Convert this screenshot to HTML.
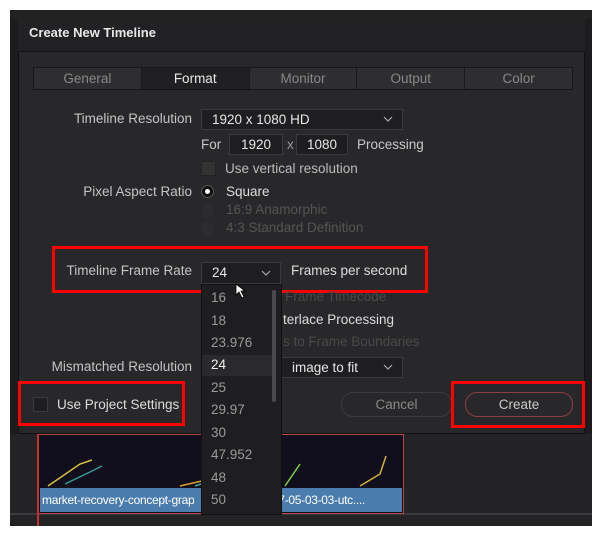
<!DOCTYPE html><html><head><style>
*{margin:0;padding:0;box-sizing:border-box}
body{width:600px;height:536px;background:#fff;position:relative;overflow:hidden;font-family:"Liberation Sans",sans-serif;font-size:13.5px;color:#c8c8c8}
.a{position:absolute}
.lbl{position:absolute;text-align:right;width:180px;left:12px;color:#c4c4c4}
.dd{position:absolute;background:#1e1e21;border:1px solid #3a3a3e;color:#e6e6e6;padding-left:10px;line-height:19px}
.chev{position:absolute}
.red{position:absolute;border:3px solid #f00}
.it{position:absolute;left:211px;color:#9a9a9a}
</style></head><body>
<div class="a" style="left:10px;top:10px;width:582px;height:516px;background:#1c1c1e"></div>
<div class="a" style="left:10px;top:10px;width:582px;height:8px;background:#222"></div>
<div class="a" style="left:10px;top:434px;width:582px;height:92px;background:#232326"></div>
<div class="a" style="left:10px;top:513px;width:582px;height:2px;background:#3a3a3d"></div>
<div class="a" style="left:38px;top:434px;width:366px;height:80px;background:#120f1c;border:1px solid #b04848"></div>
<svg class="a" style="left:40px;top:434px" width="362" height="54"><g fill="none" stroke-width="1.5"><path d="M8 52 L40 30 L52 26" stroke="#d8c040"/><path d="M25 50 L50 38 L62 32" stroke="#3a9a9a"/><path d="M140 52 L175 44 L190 30 L208 26" stroke="#e0a030"/><path d="M155 52 L185 42 L200 32" stroke="#40a0a0"/><path d="M245 52 L260 30" stroke="#80d040"/><path d="M320 52 L340 40 L346 22" stroke="#d0b040"/></g></svg>
<div class="a" style="left:40px;top:488px;width:362px;height:24px;background:#4a7cae;color:#fff;font-size:12px;line-height:24px;padding-left:2px;letter-spacing:-0.3px;white-space:nowrap;overflow:hidden">market-recovery-concept-grap<span style="padding-left:52px">3-11-27-05-03-03-utc....</span></div>
<div class="a" style="left:37px;top:434px;width:2px;height:92px;background:#c03030"></div>
<div class="a" style="left:18px;top:18px;width:567px;height:416px;background:#28282b;border:1px solid #111"></div>
<div class="a" style="left:18px;top:18px;width:567px;height:34px;background:#222225;border-bottom:1px solid #151515"></div>
<div class="a" style="left:29px;top:25px;font-weight:bold;color:#e8e8e8;font-size:13px">Create New Timeline</div>
<div class="a" style="left:33px;top:67px;width:540px;height:23px;background:#2e2e31;border:1px solid #161616;display:flex">
<div style="flex:1;text-align:center;line-height:21px;color:#888;border-right:1px solid #1a1a1a">General</div>
<div style="flex:1;text-align:center;line-height:21px;color:#e8e8e8;background:#202023;border-right:1px solid #1a1a1a">Format</div>
<div style="flex:1;text-align:center;line-height:21px;color:#888;border-right:1px solid #1a1a1a">Monitor</div>
<div style="flex:1;text-align:center;line-height:21px;color:#888;border-right:1px solid #1a1a1a">Output</div>
<div style="flex:1;text-align:center;line-height:21px;color:#888">Color</div></div>
<div class="lbl" style="top:111px">Timeline Resolution</div>
<div class="dd" style="left:201px;top:109px;width:202px;height:21px">1920 x 1080 HD</div>
<svg class="chev" style="left:383px;top:116px" width="10" height="7"><path d="M1 1 L5 5 L9 1" fill="none" stroke="#aaa" stroke-width="1.2"/></svg>
<div class="a" style="left:201px;top:137px">For</div>
<div class="dd" style="left:229px;top:134px;width:54px;height:21px;text-align:center;padding:0">1920</div>
<div class="a" style="left:287px;top:137px;color:#999">x</div>
<div class="dd" style="left:296px;top:134px;width:52px;height:21px;text-align:center;padding:0">1080</div>
<div class="a" style="left:357px;top:137px">Processing</div>
<div class="a" style="left:201px;top:161px;width:15px;height:15px;background:#333336;border:1px solid #222"></div>
<div class="a" style="left:225px;top:161px;color:#bbb">Use vertical resolution</div>
<div class="lbl" style="top:184px">Pixel Aspect Ratio</div>
<div class="a" style="left:201px;top:185px;width:13px;height:13px;border-radius:50%;background:#111;border:1px solid #555"><div style="margin:3px;width:5px;height:5px;border-radius:50%;background:#fff"></div></div>
<div class="a" style="left:226px;top:184px;color:#ddd">Square</div>
<div class="a" style="left:201px;top:204px;width:13px;height:13px;border-radius:50%;background:#2c2c2f"></div><div class="a" style="left:226px;top:202px;color:#555">16:9 Anamorphic</div>
<div class="a" style="left:201px;top:222px;width:13px;height:13px;border-radius:50%;background:#2c2c2f"></div><div class="a" style="left:226px;top:220px;color:#555">4:3 Standard Definition</div>
<div class="a" style="left:201px;top:240px;width:13px;height:13px;border-radius:50%;background:#1e1e20"></div><div class="a" style="left:226px;top:238px;color:#888">Cinemascope</div>
<div class="a" style="left:40px;top:240px;width:400px;height:55px;background:#28282b"></div>
<div class="red" style="left:52px;top:246px;width:376px;height:47px"></div>
<div class="lbl" style="top:263px">Timeline Frame Rate</div>
<div class="dd" style="left:201px;top:262px;width:80px;height:22px;line-height:20px">24</div>
<svg class="chev" style="left:261px;top:270px" width="10" height="7"><path d="M1 1 L5 5 L9 1" fill="none" stroke="#aaa" stroke-width="1.2"/></svg>
<div class="a" style="left:291px;top:263px;color:#ddd">Frames per second</div>
<div class="a" style="left:285px;top:289px;color:#4a4a4a">Frame Timecode</div>
<div class="a" style="left:283px;top:312px;color:#ddd">terlace Processing</div>
<div class="a" style="left:283px;top:334px;color:#4a4a4a">s to Frame Boundaries</div>
<div class="lbl" style="top:359px">Mismatched Resolution</div>
<div class="dd" style="left:281px;top:357px;width:122px;height:21px">image to fit</div>
<svg class="chev" style="left:383px;top:364px" width="10" height="7"><path d="M1 1 L5 5 L9 1" fill="none" stroke="#aaa" stroke-width="1.2"/></svg>
<div class="red" style="left:18px;top:381px;width:167px;height:45px"></div>
<div class="a" style="left:33px;top:397px;width:15px;height:15px;background:#1e1e20;border:1px solid #3a3a3c"></div>
<div class="a" style="left:57px;top:397px;color:#ddd">Use Project Settings</div>
<div class="a" style="left:341px;top:392px;width:111px;height:25px;border:1px solid #3c3c3f;border-radius:12px;text-align:center;line-height:23px;color:#888">Cancel</div>
<div class="red" style="left:451px;top:381px;width:134px;height:47px"></div>
<div class="a" style="left:465px;top:392px;width:108px;height:25px;border:1px solid #8a4040;border-radius:12px;text-align:center;line-height:23px;color:#ccc">Create</div>
<div class="a" style="left:201px;top:284px;width:81px;height:231px;background:#1e1e21;border:1px solid #111"></div>
<div class="a" style="left:202px;top:355px;width:70px;height:21px;background:#2a2a2d"></div>
<div class="a" style="left:272px;top:290px;width:4px;height:112px;background:#4a4a4d;border-radius:2px"></div>
<div class="it" style="top:290px">16</div><div class="it" style="top:313px">18</div><div class="it" style="top:335px">23.976</div>
<div class="it" style="top:357px;color:#eee">24</div><div class="it" style="top:380px">25</div><div class="it" style="top:402px">29.97</div>
<div class="it" style="top:425px">30</div><div class="it" style="top:447px">47.952</div><div class="it" style="top:470px">48</div><div class="it" style="top:492px">50</div>
<svg class="a" style="left:235px;top:283px" width="12" height="16"><path d="M1 1 L1 12 L4 9 L7 15 L9 14 L6 8 L10 8 Z" fill="#fff" stroke="#000" stroke-width="0.8"/></svg>
</body></html>
